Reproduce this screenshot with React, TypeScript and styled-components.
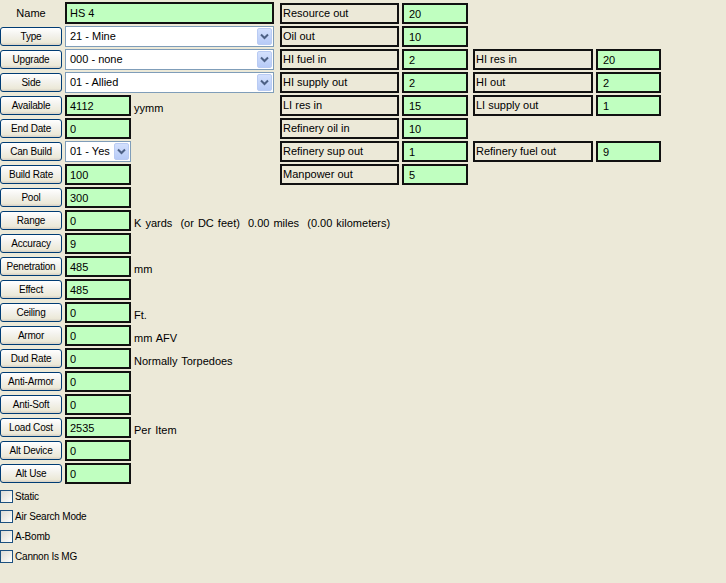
import React from "react";
import styled, { createGlobalStyle } from "styled-components";

const Global = createGlobalStyle`
  html, body {
    margin: 0;
    padding: 0;
    background: #ece9d8;
    font-family: "Liberation Sans", Arial, sans-serif;
  }
  #root { width: 726px; height: 583px; overflow: hidden; }
`;

const Page = styled.div`
  display: flex;
  gap: 6px;
  padding-top: 3px;
  width: 726px;
  height: 583px;
  box-sizing: border-box;
  background: #ece9d8;
`;

const LeftColumn = styled.div`
  display: flex;
  flex-direction: column;
  gap: 3px;
  width: 274px;
  flex-shrink: 0;
`;

const Row = styled.div`
  display: flex;
  align-items: center;
  gap: 3px;
  height: 20px;
`;

const PlainLabel = styled.div`
  width: 62px;
  text-align: center;
  font-size: 11px;
  color: #000;
`;

const XpButton = styled.button`
  width: 62px;
  height: 19px;
  margin: 0;
  padding: 0;
  flex-shrink: 0;
  border: 1px solid #003c74;
  border-radius: 3px;
  background: linear-gradient(#ffffff 0%, #f4f3ee 40%, #ece9d8 85%, #d6d0c5 100%);
  font-family: "Liberation Sans", Arial, sans-serif;
  font-size: 10px;
  letter-spacing: -0.2px;
  color: #000;
  white-space: nowrap;
`;

const Field = styled.div<{ $wide?: boolean }>`
  box-sizing: border-box;
  width: ${(p) => (p.$wide ? "209px" : "66px")};
  height: ${(p) => (p.$wide ? "22px" : "21px")};
  flex-shrink: 0;
  border: 2px solid #111;
  background: #c0ffc0;
  font-size: 11px;
  line-height: 14px;
  padding: 2px 0 0 3px;
  color: #000;
`;

const Select = styled.div<{ $wide?: boolean }>`
  box-sizing: border-box;
  width: ${(p) => (p.$wide ? "209px" : "66px")};
  height: 21px;
  flex-shrink: 0;
  border: 1px solid #7f9db9;
  background: #fff;
  display: flex;
  align-items: center;
  padding: 1px;
  font-size: 11px;
  color: #000;
`;

const SelectText = styled.div`
  flex: 1;
  padding-left: 3px;
  white-space: nowrap;
  overflow: hidden;
`;

const ArrowBox = styled.div`
  width: 15px;
  height: 17px;
  box-sizing: border-box;
  border: 1px solid #b9cbf3;
  border-radius: 2px;
  background: linear-gradient(#d3e0fd, #b7cbf7);
  display: flex;
  align-items: center;
  justify-content: center;
`;

const Suffix = styled.div`
  font-size: 11px;
  word-spacing: 1px;
  white-space: pre;
  color: #000;
  padding-top: 5px;
`;

const CheckList = styled.div`
  display: flex;
  flex-direction: column;
`;

const CheckRow = styled.label`
  display: flex;
  align-items: center;
  gap: 2px;
  height: 20px;
  font-size: 10px;
  letter-spacing: -0.2px;
  color: #000;
`;

const CheckBox = styled.span`
  width: 13px;
  height: 13px;
  box-sizing: border-box;
  border: 1px solid #1c5180;
  background: linear-gradient(135deg, #dcdcd7 0%, #f0f0ea 60%, #ffffff 100%);
  flex-shrink: 0;
`;

const RightPanel = styled.div`
  display: flex;
  flex-direction: column;
  gap: 3px;
`;

const RightRow = styled.div`
  display: flex;
  gap: 5px;
  height: 20px;
`;

const Pair = styled.div`
  display: flex;
  gap: 3px;
`;

const BoxLabel = styled.div<{ $w: number }>`
  box-sizing: border-box;
  width: ${(p) => p.$w}px;
  height: 21px;
  border: 2px solid #111;
  background: #ece9d8;
  font-size: 11px;
  line-height: 14px;
  padding: 1px 0 0 1px;
  color: #000;
  white-space: nowrap;
`;

const BoxValue = styled.div<{ $w: number }>`
  box-sizing: border-box;
  width: ${(p) => p.$w}px;
  height: 21px;
  border: 2px solid #111;
  background: #c0ffc0;
  font-size: 11px;
  line-height: 14px;
  padding: 2px 0 0 5px;
  color: #000;
`;

const Chevron = () => (
  <svg width="9" height="7" viewBox="0 0 9 7">
    <path d="M1 1.5 L4.5 5 L8 1.5" fill="none" stroke="#4d6185" strokeWidth="2" />
  </svg>
);

type LeftItem = {
  label: string;
  value: string;
  kind?: "field" | "select";
  wide?: boolean;
  suffix?: string;
  plain?: boolean;
};

const leftItems: LeftItem[] = [
  { label: "Name", value: "HS 4", wide: true, plain: true },
  { label: "Type", value: "21 - Mine", kind: "select", wide: true },
  { label: "Upgrade", value: "000 - none", kind: "select", wide: true },
  { label: "Side", value: "01 - Allied", kind: "select", wide: true },
  { label: "Available", value: "4112", suffix: "yymm" },
  { label: "End Date", value: "0" },
  { label: "Can Build", value: "01 - Yes", kind: "select" },
  { label: "Build Rate", value: "100" },
  { label: "Pool", value: "300" },
  { label: "Range", value: "0", suffix: "K yards  (or DC feet)  0.00 miles  (0.00 kilometers)" },
  { label: "Accuracy", value: "9" },
  { label: "Penetration", value: "485", suffix: "mm" },
  { label: "Effect", value: "485" },
  { label: "Ceiling", value: "0", suffix: "Ft." },
  { label: "Armor", value: "0", suffix: "mm AFV" },
  { label: "Dud Rate", value: "0", suffix: "Normally Torpedoes" },
  { label: "Anti-Armor", value: "0" },
  { label: "Anti-Soft", value: "0" },
  { label: "Load Cost", value: "2535", suffix: "Per Item" },
  { label: "Alt Device", value: "0" },
  { label: "Alt Use", value: "0" },
];

const checks = ["Static", "Air Search Mode", "A-Bomb", "Cannon Is MG"];

type Cell = { label: string; value: string };
const rightRows: Cell[][] = [
  [{ label: "Resource out", value: "20" }],
  [{ label: "Oil out", value: "10" }],
  [{ label: "HI fuel in", value: "2" }, { label: "HI res in", value: "20" }],
  [{ label: "HI supply out", value: "2" }, { label: "HI out", value: "2" }],
  [{ label: "LI res in", value: "15" }, { label: "LI supply out", value: "1" }],
  [{ label: "Refinery oil in", value: "10" }],
  [{ label: "Refinery sup out", value: "1" }, { label: "Refinery fuel out", value: "9" }],
  [{ label: "Manpower out", value: "5" }],
];

export default function App() {
  return (
    <>
      <Global />
      <Page>
        <LeftColumn>
          {leftItems.map((it) => (
            <Row key={it.label}>
              {it.plain ? <PlainLabel>{it.label}</PlainLabel> : <XpButton>{it.label}</XpButton>}
              {it.kind === "select" ? (
                <Select $wide={it.wide}>
                  <SelectText>{it.value}</SelectText>
                  <ArrowBox>
                    <Chevron />
                  </ArrowBox>
                </Select>
              ) : (
                <Field $wide={it.wide}>{it.value}</Field>
              )}
              {it.suffix && <Suffix>{it.suffix}</Suffix>}
            </Row>
          ))}
          <CheckList>
            {checks.map((c) => (
              <CheckRow key={c}>
                <CheckBox />
                {c}
              </CheckRow>
            ))}
          </CheckList>
        </LeftColumn>
        <RightPanel>
          {rightRows.map((row, i) => (
            <RightRow key={i}>
              {row.map((cell, j) => (
                <Pair key={cell.label}>
                  <BoxLabel $w={j === 0 ? 119 : 120}>{cell.label}</BoxLabel>
                  <BoxValue $w={j === 0 ? 66 : 65}>{cell.value}</BoxValue>
                </Pair>
              ))}
            </RightRow>
          ))}
        </RightPanel>
      </Page>
    </>
  );
}
